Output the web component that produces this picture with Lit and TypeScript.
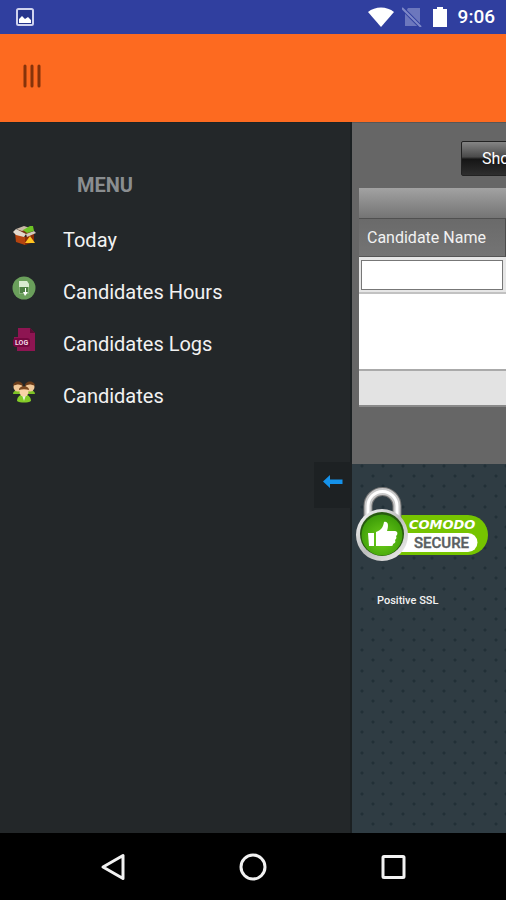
import { LitElement, html, css, svg } from "lit";
import { customElement, state } from "lit/decorators.js";

const boxIcon = svg`
  <path d="M3 9 L13 13 L13 21 L4 18Z" fill="#b5440f"/>
  <path d="M13 13 L22 9 L22 18 L13 21Z" fill="#8a2c08"/>
  <path d="M4 7 L13 4 L22 6 L14 11Z" fill="#7a3414"/>
  <path d="M1 8 L4 5 L14 10 L12 13 L4 11Z" fill="#e2d8cc"/>
  <path d="M14 10 L22 7 L24 9 L15 13Z" fill="#d6cabd"/>
  <path d="M4 5 L12 2 L18 4 L10 7Z" fill="#c9b8a6"/>
  <path d="M11 6 L18 2 L21 2 L22 7 L15 9Z" fill="#6cc224"/>
  <path d="M13 19 L18 12 L23 19Z" fill="#ffc421"/>`;

const hoursIcon = svg`
  <circle cx="12" cy="12" r="11.5" fill="#6a9f5b"/>
  <path d="M7 5h8l2 3v10H7z" fill="#86b278"/>
  <path d="M7 5h8l2 3v3H7z" fill="#d8ead0"/>
  <path d="M8 11h8v6H8z" fill="#4f8145"/>
  <path d="M14 12v4h2l-3 4-2-4h2v-4z" fill="#fff"/>`;

const logIcon = svg`
  <path d="M6 0h12l5 5v18H5v-6H2V9h4z" fill="#8e1552"/>
  <path d="M18 0v5h5z" fill="#5e0a35"/>
  <rect x="1" y="10" width="17" height="9" rx="3" fill="#75083f"/>
  <text x="3" y="17" font-family="Roboto, sans-serif" font-weight="700" font-size="7" fill="#f3d6e4">LOG</text>`;

const peopleIcon = svg`
  <path d="M1 14c0-5 9-5 9 0zM14 14c0-5 9-5 9 0z" fill="#7dc225"/>
  <circle cx="6" cy="7" r="4.500" fill="#f0c898"/>
  <circle cx="18" cy="7" r="4.500" fill="#f0c898"/>
  <path d="M1 6c0-6 10-6 10 0-3-2-6-2-10 0zM13 6c0-6 10-6 10 0-4-2-7-2-10 0z" fill="#6b3d1a"/>
  <path d="M5 21c0-9 14-9 14 0-3 2-11 2-14 0z" fill="#84cc28"/>
  <path d="M10 15h4l-2 6z" fill="#e8f5d8"/>
  <circle cx="12" cy="12" r="4.500" fill="#f8d3a6"/>
  <path d="M7 10c0-5 10-5 10 0-3-1-7-1-10 0z" fill="#7a4820"/>`;

const entries = [
  { label: "Today", icon: boxIcon },
  { label: "Candidates Hours", icon: hoursIcon },
  { label: "Candidates Logs", icon: logIcon },
  { label: "Candidates", icon: peopleIcon },
];

@customElement("status-bar")
class StatusBar extends LitElement {
  static styles = css`
    :host {
      display: flex;
      align-items: center;
      height: 34px;
      box-sizing: border-box;
      padding: 0 11px 0 16px;
      background: #303f9f;
      color: #fff;
      font: 500 19px/34px Roboto, sans-serif;
    }
    svg { display: block; }
    .signals {
      display: flex;
      align-items: center;
      gap: 8px;
      margin-left: auto;
    }
  `;
  render() {
    return html`
      <svg width="18" height="18" viewBox="0 0 18 18" aria-hidden="true">
        <rect x="1" y="1" width="16" height="16" rx="1.5" fill="#26358c" stroke="#d0d3ee" stroke-width="2"/>
        <path d="M3 15v-4l3-3 3 3 3-2 3 3v3z" fill="#fff"/>
      </svg>
      <div class="signals">
        <svg width="26" height="20" viewBox="0 0 26 20" aria-hidden="true">
          <path d="M0 5C7-1 19-1 26 5L13 20z" fill="#fff"/>
        </svg>
        <svg width="20" height="20" viewBox="0 0 20 20" aria-hidden="true">
          <path d="M6 1h12v18H3V6z" fill="#6c77bd"/>
          <path d="M0 1l19 19" stroke="#303f9f" stroke-width="4"/>
          <path d="M0 1l19 19" stroke="#7f89c8" stroke-width="2"/>
        </svg>
        <svg width="20" height="22" viewBox="0 0 20 22" aria-hidden="true">
          <path d="M3 3h4V1h6v2h4v18H3z" fill="#fff"/>
        </svg>
        <span>9:06</span>
      </div>
    `;
  }
}

@customElement("side-drawer")
class SideDrawer extends LitElement {
  static styles = css`
    :host {
      display: flex;
      flex-direction: column;
      position: relative;
      flex: 0 0 352px;
      box-sizing: border-box;
      padding-top: 48px;
      background: #232729;
      border-right: 2px solid #1b2022;
      border-top: 1px solid #1b2526;
      font-family: Roboto, sans-serif;
    }
    .title {
      margin: 0 0 15px 77px;
      color: #8a8e90;
      font-size: 20px;
      line-height: 28px;
      font-weight: 700;
    }
    .list { margin: 0; padding: 0; list-style: none; }
    .link {
      display: flex;
      align-items: flex-start;
      gap: 27px;
      height: 52px;
      box-sizing: border-box;
      padding: 10px 12px;
      color: #f2f2f2;
      font-size: 20px;
      line-height: 32px;
      text-decoration: none;
    }
    .icon { flex: none; display: block; }
    .toggle {
      position: absolute;
      right: -2px;
      top: 339px;
      width: 38px;
      height: 46px;
      display: flex;
      justify-content: center;
      padding: 13px 0 0;
      border: 0;
      background: #1d2123;
    }
  `;
  render() {
    return html`
      <h2 class="title">MENU</h2>
      <ul class="list">
        ${entries.map(
          (e) => html`<li>
            <a class="link" href="#">
              <svg class="icon" width="24" height="24" viewBox="0 0 24 24" aria-hidden="true">${e.icon}</svg>
              <span>${e.label}</span>
            </a>
          </li>`
        )}
      </ul>
      <button class="toggle" aria-label="Close menu">
        <svg width="20" height="13" viewBox="0 0 20 13" aria-hidden="true">
          <path d="M0 6.500 7 0v4.500h12.500v4.500H7V13z" fill="#1592ea"/>
        </svg>
      </button>
    `;
  }
}

@customElement("candidate-page")
class CandidatePage extends LitElement {
  @state() private filter = "";

  static styles = css`
    :host {
      display: flex;
      flex-direction: column;
      flex: 1;
      min-width: 0;
      overflow: hidden;
      background: #666;
      color: #f2f2f2;
      font-family: Roboto, sans-serif;
    }
    .actions {
      display: flex;
      padding: 18px 0 12px 109px;
      border-top: 1px solid #575757;
    }
    .show {
      flex: none;
      height: 35px;
      padding: 0 20px;
      border: 1px solid #222;
      border-radius: 2px;
      background: linear-gradient(#858585, #4a4a4a 45%, #151515 52%, #2e2e2e);
      color: #fff;
      font: 16px/32px Roboto, sans-serif;
    }
    .grid {
      width: 294px;
      margin-left: 7px;
    }
    .band {
      height: 30px;
      border-bottom: 1px solid #505050;
      background: linear-gradient(#a2a2a2, #747474);
    }
    .table {
      width: 100%;
      table-layout: fixed;
      border-collapse: separate;
      border-spacing: 0;
      border-bottom: 2px solid #8a8a8a;
    }
    .table th {
      height: 38px;
      box-sizing: border-box;
      padding: 0 8px;
      border-right: 1px solid #4c4c4c;
      border-bottom: 1px solid #555;
      background: linear-gradient(#6a6a6a, #747474);
      text-align: left;
      font-size: 16px;
      font-weight: 400;
      line-height: 20px;
    }
    .table td { padding: 0; background: #fff; }
    .table .filter {
      height: 37px;
      padding: 0 2px;
      box-sizing: border-box;
      background: #e6e6e6;
      border-bottom: 2px solid #c2c2c2;
    }
    .field {
      display: block;
      width: 142px;
      height: 30px;
      box-sizing: border-box;
      padding: 0 6px;
      border: 1px solid #777;
      background: #fff;
      font: 16px Roboto, sans-serif;
    }
    .table .blank { height: 75px; }
    .table .foot {
      height: 36px;
      box-sizing: border-box;
      border-top: 2px solid #aaa;
      background: #e3e3e3;
    }
    .footer {
      flex: 1;
      margin-top: 57px;
      padding: 23px 0 0 3px;
      background-color: #2f3c43;
      background-image:
        radial-gradient(circle at 10px 22px, #223037 1px, transparent 2px),
        radial-gradient(circle at 31px 22px, #223037 1px, transparent 2px),
        radial-gradient(circle at 10px 2px, #223037 1px, transparent 2px),
        radial-gradient(circle at 31px 2px, #223037 1px, transparent 2px),
        radial-gradient(circle at 21px 12px, #223037 1px, transparent 2px),
        radial-gradient(circle at 39px 12px, #223037 1px, transparent 2px),
        radial-gradient(circle at 21px 32px, #223037 1px, transparent 2px),
        radial-gradient(circle at 39px 32px, #223037 1px, transparent 2px);
      background-size: 41px 41px;
    }
    .seal { display: block; }
    .brand { font: italic 700 13px "DejaVu Sans", sans-serif; }
    .word { font: 500 15px Roboto, sans-serif; }
    .caption {
      margin: 30px 0 0 22px;
      font-size: 11px;
      line-height: 16px;
      font-weight: 500;
    }
  `;

  private onFilter(e: Event) {
    this.filter = (e.target as HTMLInputElement).value;
  }

  render() {
    return html`
      <div class="actions"><button class="show">Show</button></div>
      <div class="grid">
        <div class="band"></div>
        <table class="table">
          <thead>
            <tr><th scope="col">Candidate Name</th><th scope="col"></th></tr>
          </thead>
          <tbody>
            <tr>
              <td class="filter">
                <input class="field" type="text" aria-label="Candidate Name" .value=${this.filter} @input=${this.onFilter} />
              </td>
              <td class="filter"></td>
            </tr>
            <tr><td class="blank" colspan="2"></td></tr>
          </tbody>
          <tfoot>
            <tr><td class="foot" colspan="2"></td></tr>
          </tfoot>
        </table>
      </div>
      <div class="footer">
        <svg class="seal" width="136" height="76" viewBox="0 0 136 76" role="img" aria-label="Comodo Secure">
          <defs>
            <linearGradient id="metal" x1="0" y1="0" x2="1" y2="1">
              <stop offset="0" stop-color="#fafafa"/>
              <stop offset="0.5" stop-color="#bdbdbd"/>
              <stop offset="1" stop-color="#f4f4f4"/>
            </linearGradient>
            <radialGradient id="green" cx="0.5" cy="0.6" r="0.6">
              <stop offset="0" stop-color="#6fd11a"/>
              <stop offset="1" stop-color="#3b9a08"/>
            </radialGradient>
          </defs>
          <path d="M34 28h79a20 20 0 0 1 0 40H34z" fill="#76c400"/>
          <path d="M40 46h73a9.500 9.500 0 0 1 0 19H40z" fill="#fff"/>
          <path d="M13 32V19a14 14 0 0 1 29 0v13" fill="none" stroke="#757575" stroke-width="9"/>
          <path d="M13 32V19a14 14 0 0 1 29 0v13" fill="none" stroke="#c9c9c9" stroke-width="7"/>
          <path d="M13 32V19a14 14 0 0 1 29 0v13" fill="none" stroke="#fff" stroke-width="3"/>
          <circle cx="27" cy="48" r="26" fill="url(#metal)"/>
          <circle cx="27" cy="47" r="22" fill="#27590f"/>
          <circle cx="27" cy="48" r="20.500" fill="url(#green)"/>
          <path d="M13 46h6v13h-5z" fill="#fff"/>
          <path d="M21 45c5-2 7-4 8-10 4-1 5 3 3 9h8c3 0 3 4 1 5 1 2 0 3-1 4 1 2 0 3-2 4 0 2-1 2-3 2H21z" fill="#fff"/>
          <text class="brand" x="54" y="42" fill="#fff">COMODO</text>
          <text class="word" x="59" y="61" fill="#5a5f62" stroke="#5a5f62" stroke-width="0.4">SECURE</text>
        </svg>
        <p class="caption">Positive SSL</p>
      </div>
    `;
  }
}

@customElement("app-root")
class AppRoot extends LitElement {
  static styles = css`
    :host {
      display: flex;
      flex-direction: column;
      min-height: 100vh;
      overflow: hidden;
      background: #000;
    }
    .header {
      display: flex;
      height: 88px;
      box-sizing: border-box;
      padding: 30px 23px;
      background: #fd6a20;
    }
    .burger {
      display: block;
      height: 24px;
      padding: 0;
      border: 0;
      background: none;
    }
    .main { display: flex; flex: 1; }
    .system {
      display: flex;
      justify-content: center;
      align-items: center;
      gap: 112px;
      height: 67px;
      background: #000;
    }
    .key {
      display: block;
      padding: 0;
      border: 0;
      background: none;
    }
    .glyph { display: block; fill: none; stroke: #f2f2f2; stroke-width: 3; }
  `;
  render() {
    return html`
      <status-bar></status-bar>
      <header class="header">
        <button class="burger" aria-label="Menu">
          <svg width="18" height="24" viewBox="0 0 18 24" aria-hidden="true">
            <path d="M2 2v20M9 2v20M16 2v20" stroke="#86330a" stroke-width="3" stroke-linecap="round"/>
          </svg>
        </button>
      </header>
      <main class="main">
        <side-drawer></side-drawer>
        <candidate-page></candidate-page>
      </main>
      <nav class="system">
        <button class="key" aria-label="Back">
          <svg class="glyph" width="28" height="28" viewBox="0 0 28 28"><path d="M4 14 24 2.500v23z" stroke-linejoin="round"/></svg>
        </button>
        <button class="key" aria-label="Home">
          <svg class="glyph" width="28" height="28" viewBox="0 0 28 28"><circle cx="14" cy="14" r="12"/></svg>
        </button>
        <button class="key" aria-label="Recent apps">
          <svg class="glyph" width="28" height="28" viewBox="0 0 28 28"><rect x="4" y="3.500" width="21" height="21" rx="1"/></svg>
        </button>
      </nav>
    `;
  }
}
